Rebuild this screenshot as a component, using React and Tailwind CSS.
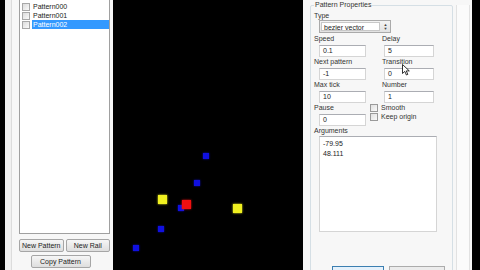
import React from 'react'

const font = { fontFamily: '"Liberation Sans", Arial, sans-serif' }

const Field = ({ value, w = 'w-[47px]' }) => (
  <div className={`${w} h-[12px] bg-white border border-[#d5d5d5] border-t-[#abadb3] pl-[3px] text-[7px] leading-[10px] text-[#222]`}>
    {value}
  </div>
)

const Label = ({ children }) => (
  <div className="text-[7px] leading-[8px] text-[#333] whitespace-nowrap">{children}</div>
)

const Check = () => (
  <div className="w-[8px] h-[8px] border border-[#9a9a9a] bg-gradient-to-br from-[#e0e0e0] to-[#fafafa] shrink-0" />
)

const Btn = ({ children, className = '' }) => (
  <div className={`h-[13px] border border-[#a6a6a6] rounded-[2px] bg-gradient-to-b from-[#f6f6f6] to-[#dedede] text-[7px] leading-[11px] text-[#222] text-center whitespace-nowrap ${className}`}>
    {children}
  </div>
)

const dots = [
  { x: 203, y: 153, s: 6, c: '#1010e0' },
  { x: 194, y: 180, s: 6, c: '#1010e0' },
  { x: 178, y: 205, s: 6, c: '#1010e0' },
  { x: 158, y: 226, s: 6, c: '#1010e0' },
  { x: 133, y: 245, s: 6, c: '#1010e0' },
  { x: 158, y: 195, s: 9, c: '#f0f020' },
  { x: 233, y: 204, s: 9, c: '#f0f020' },
  { x: 182, y: 200, s: 9, c: '#f01010' },
]

export default function App() {
  return (
    <div className="w-[480px] h-[270px] flex bg-black overflow-hidden relative" style={font}>
      {/* window edge */}
      <div className="w-[5px] bg-black" />
      {/* left panel */}
      <div className="w-[108px] bg-[#f0f0f0] flex flex-col pl-[6px]">
        <div className="flex-1 flex border-l border-[#dcdcdc] bg-[#f7f7f7] pl-[7px] pr-[3px]">
          <div className="flex flex-col w-full">
            <div className="h-[234px] bg-white border border-[#a0a0a0] border-t-0 pt-[2px] pl-[1px]">
              {['Pattern000', 'Pattern001', 'Pattern002'].map((p, i) => (
                <div key={p} className="flex items-center h-[9px]">
                  <div className="w-[8px] h-[8px] border border-[#a8a8a8] bg-gradient-to-br from-[#dcdcdc] to-[#fafafa] mr-[2px] ml-[1px]" />
                  <div className={`flex-1 text-[7px] leading-[9px] pl-[1px] ${i === 2 ? 'bg-[#3399ff] text-white' : 'text-[#222]'}`}>{p}</div>
                </div>
              ))}
            </div>
            <div className="flex gap-[2px] mt-[5px]">
              <Btn className="w-[45px]">New Pattern</Btn>
              <Btn className="w-[45px]">New Rail</Btn>
            </div>
            <div className="flex justify-center mt-[3px] pr-[8px]">
              <Btn className="w-[60px]">Copy Pattern</Btn>
            </div>
          </div>
        </div>
      </div>
      {/* canvas */}
      <div className="w-[190px] bg-black relative">
        {dots.map((d, i) => (
          <div
            key={i}
            className="absolute"
            style={{ left: d.x - 113, top: d.y, width: d.s, height: d.s, background: d.c, boxShadow: `0 0 2px ${d.c}` }}
          />
        ))}
      </div>
      {/* right panel */}
      <div className="w-[169px] bg-[#f7f7f7] flex pl-[7px] pt-[5px]">
        <div className="w-[143px] h-[300px] border border-[#d5dfe5] rounded-[2px] relative pl-[3px] pt-[6px]">
          <div className="absolute left-[3px] -top-[5px] bg-[#f7f7f7] px-[1px] text-[7px] leading-[8px] text-[#333]">Pattern Properties</div>
          <Label>Type</Label>
          <div className="flex ml-[5px] w-[72px] h-[13px] border border-[#aaa] bg-gradient-to-b from-[#f4f4f4] to-[#e2e2e2]">
            <div className="flex-1 m-[1px] bg-white border border-[#c8c8c8] text-[7px] leading-[9px] pl-[2px] text-[#222]">bezier vector</div>
            <div className="w-[9px] flex flex-col items-center justify-center text-[4px] leading-[4px] text-[#444]">
              <span>▲</span><span>▼</span>
            </div>
          </div>
          <div className="grid grid-cols-[68px_72px] mt-[2px] gap-y-[1px]">
            {[
              ['Speed', '0.1', 'Delay', '5'],
              ['Next pattern', '-1', 'Transition', '0'],
              ['Max tick', '10', 'Number', '1'],
            ].map(([a, av, b, bv]) => (
              <React.Fragment key={a}>
                <div>
                  <Label>{a}</Label>
                  <div className="ml-[5px] mt-[2px]"><Field value={av} /></div>
                </div>
                <div>
                  <Label>{b}</Label>
                  <div className="ml-[2px] mt-[2px]"><Field value={bv} w="w-[50px]" /></div>
                </div>
              </React.Fragment>
            ))}
            <div>
              <Label>Pause</Label>
              <div className="ml-[5px] mt-[2px]"><Field value="0" /></div>
            </div>
            <div className="flex flex-col gap-[1px] -ml-[12px]">
              <div className="flex items-center gap-[3px]"><Check /><span className="text-[7px] leading-[8px] text-[#333]">Smooth</span></div>
              <div className="flex items-center gap-[3px]"><Check /><span className="text-[7px] leading-[8px] text-[#333]">Keep origin</span></div>
            </div>
          </div>
          <div className="mt-[1px]"><Label>Arguments</Label></div>
          <div className="ml-[5px] mt-[1px] w-[118px] h-[96px] bg-white border border-[#d5d5d5] border-t-[#abadb3] pl-[3px] pt-[2px] text-[7px] leading-[10px] text-[#222]">
            <div>-79.95</div>
            <div>48.111</div>
          </div>
        </div>
        <div className="ml-[3px] w-[14px] border-l border-r border-[#e2e2e2] bg-[#fbfbfb]" />
      </div>
      <div className="flex-1 bg-black" />
      {/* bottom buttons peeking */}
      <div className="absolute left-[332px] top-[266px] w-[52px] h-[8px] border border-[#3c7fb1] bg-[#e5f1fb]" />
      <div className="absolute left-[389px] top-[266px] w-[56px] h-[8px] border border-[#acacac] bg-[#ececec]" />
      {/* cursor */}
      <svg className="absolute left-[402px] top-[64px]" width="8" height="12" viewBox="0 0 8 12">
        <path d="M0.5 0.5 L0.5 9.5 L2.8 7.4 L4.4 11 L5.8 10.4 L4.3 6.9 L7.3 6.9 Z" fill="#fff" stroke="#000" strokeWidth="0.8" />
      </svg>
    </div>
  )
}
